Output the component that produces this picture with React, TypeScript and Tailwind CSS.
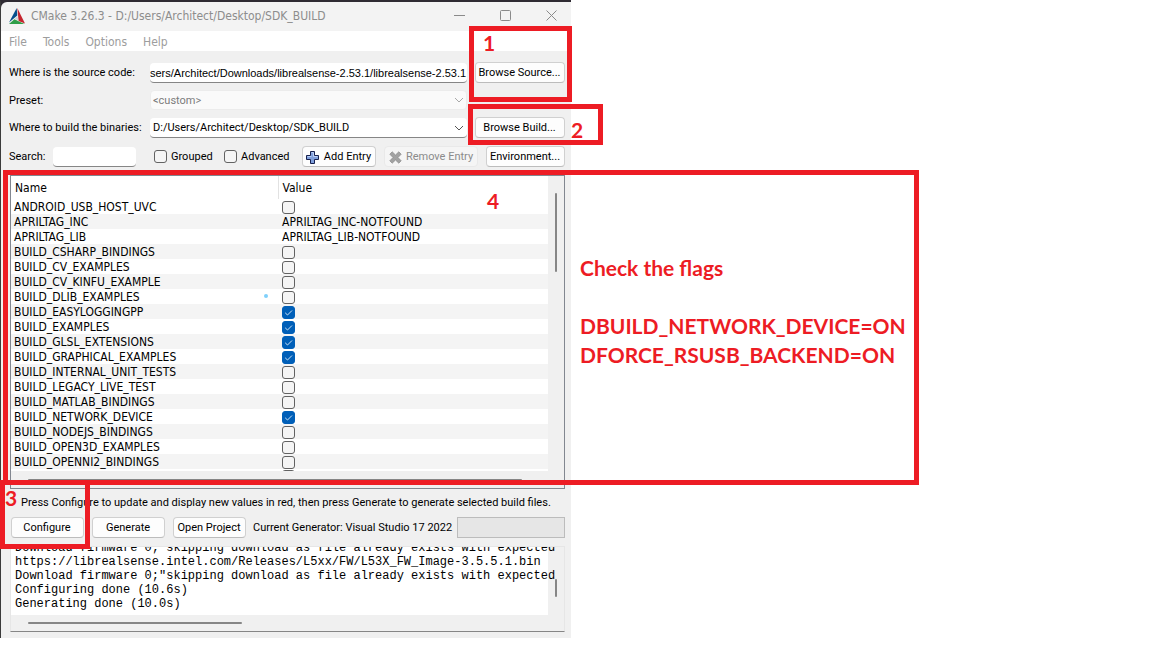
import React from "react";

const entries: { name: string; value: boolean | string }[] = [
  { name: "ANDROID_USB_HOST_UVC", value: false },
  { name: "APRILTAG_INC", value: "APRILTAG_INC-NOTFOUND" },
  { name: "APRILTAG_LIB", value: "APRILTAG_LIB-NOTFOUND" },
  { name: "BUILD_CSHARP_BINDINGS", value: false },
  { name: "BUILD_CV_EXAMPLES", value: false },
  { name: "BUILD_CV_KINFU_EXAMPLE", value: false },
  { name: "BUILD_DLIB_EXAMPLES", value: false },
  { name: "BUILD_EASYLOGGINGPP", value: true },
  { name: "BUILD_EXAMPLES", value: true },
  { name: "BUILD_GLSL_EXTENSIONS", value: true },
  { name: "BUILD_GRAPHICAL_EXAMPLES", value: true },
  { name: "BUILD_INTERNAL_UNIT_TESTS", value: false },
  { name: "BUILD_LEGACY_LIVE_TEST", value: false },
  { name: "BUILD_MATLAB_BINDINGS", value: false },
  { name: "BUILD_NETWORK_DEVICE", value: true },
  { name: "BUILD_NODEJS_BINDINGS", value: false },
  { name: "BUILD_OPEN3D_EXAMPLES", value: false },
  { name: "BUILD_OPENNI2_BINDINGS", value: false },
];

const logLines = [
  'Download firmware 0;"skipping download as file already exists with expected',
  "https://librealsense.intel.com/Releases/L5xx/FW/L53X_FW_Image-3.5.5.1.bin",
  'Download firmware 0;"skipping download as file already exists with expected',
  "Configuring done (10.6s)",
  "Generating done (10.0s)",
];

function Check({ id, label, on = false }: { id?: string; label?: string; on?: boolean }) {
  return (
    <span className="relative block size-[13px] shrink-0">
      <input
        type="checkbox"
        id={id}
        aria-label={label}
        defaultChecked={on}
        className="peer block size-[13px] appearance-none rounded-[3px] border border-[#626262] bg-[#f5f5f5] checked:border-[#005fb8] checked:bg-[#005fb8]"
      />
      <svg
        viewBox="0 0 13 13"
        className="pointer-events-none absolute inset-0 hidden size-[13px] peer-checked:block"
        fill="none"
        stroke="#cfe3f5"
        strokeWidth="1"
      >
        <path d="M3.2 6.8 5.5 9 10 4.5" />
      </svg>
    </span>
  );
}

function Button({ children, className = "" }: { children: React.ReactNode; className?: string }) {
  return (
    <button
      type="button"
      className={`flex h-[21px] shrink-0 items-center justify-center whitespace-nowrap rounded-[4px] border border-[#d0d0d0] border-b-[#bcbcbc] bg-[#fdfdfd] pt-px pr-px ${className}`}
    >
      {children}
    </button>
  );
}

function Chevron({ color }: { color: string }) {
  return (
    <svg viewBox="0 0 10 6" className="pointer-events-none absolute right-[3px] top-[7px] h-[6px] w-[10px]" fill="none" stroke={color}>
      <path d="M1 1l4 4 4-4" />
    </svg>
  );
}

function TitleBar() {
  return (
    <header className="flex h-[29px] items-center rounded-tl-[6px] bg-[#f3f3f3] pb-[2px] pl-2 font-['DejaVu_Sans_Condensed',sans-serif] text-[12px] text-[#8d8d8d]">
      <svg viewBox="0 0 16 16" className="mr-[6px] size-4">
        <path d="M7.7 0 0 14.6 8.3 7.6z" fill="#064f8c" />
        <path d="M8.3 0 16 15.6 9.6 12.9z" fill="#c4242e" />
        <path d="M0 16 5.4 11.2 15.4 16z" fill="#2f9e49" />
        <path d="M8.5 8.2 5.8 10.6 9.3 12.4z" fill="#cfd3d8" />
      </svg>
      <h1 className="flex-1 whitespace-nowrap">CMake 3.26.3 - D:/Users/Architect/Desktop/SDK_BUILD</h1>
      <div className="flex items-center gap-[35px] pr-[14px]">
        <button type="button" aria-label="Minimize">
          <svg viewBox="0 0 11 11" className="size-[11px]" stroke="#8a8a8a">
            <path d="M0 5.5h11" />
          </svg>
        </button>
        <button type="button" aria-label="Maximize">
          <svg viewBox="0 0 11 11" className="size-[11px]" fill="none" stroke="#8a8a8a">
            <rect x=".5" y=".5" width="10" height="10" rx="1" />
          </svg>
        </button>
        <button type="button" aria-label="Close">
          <svg viewBox="0 0 11 11" className="size-[11px]" stroke="#8a8a8a">
            <path d="M.5.5l10 10M10.5.5l-10 10" />
          </svg>
        </button>
      </div>
    </header>
  );
}

function CacheTable() {
  return (
    <section className="relative ml-px mt-2 flex h-[314px] flex-col border border-[#828790]">
      <div className="mr-4 h-[295px] overflow-hidden bg-white">
        <table className="w-full table-fixed border-collapse text-left font-['DejaVu_Sans_Condensed',sans-serif] text-[12px] leading-[14px] text-black">
          <thead>
            <tr className="h-[23px]">
              <th className="w-[267px] border-r border-[#e2e2e2] p-0 pl-1 pt-px font-normal">Name</th>
              <th className="p-0 pl-1 pt-px font-normal">Value</th>
            </tr>
          </thead>
          <tbody>
            {entries.map((e) => (
              <tr key={e.name} className="h-[15px] even:bg-[#f4f4f4]">
                <td className="p-0 pl-[3px] pt-px">{e.name}</td>
                <td className="p-0 pl-1 pt-px">
                  {typeof e.value === "string" ? e.value : <Check label={e.name} on={e.value} />}
                </td>
              </tr>
            ))}
            <tr className="h-[15px]">
              <td className="p-0" />
              <td className="p-0 pl-1">
                <Check label="Next entry" />
              </td>
            </tr>
          </tbody>
        </table>
      </div>
      <span className="absolute right-[7px] top-[17px] h-[79px] w-[2px] rounded bg-[#868686]" />
      <span className="absolute left-[17px] top-[303px] h-[2px] w-[494px] rounded bg-[#868686]" />
      <span className="absolute left-[253px] top-[118px] size-1 rounded-full bg-[#7fd0fb]" />
    </section>
  );
}

function CMakeWindow() {
  return (
    <main className="w-[571px] border-l border-t-2 border-l-[#3b3b3b] border-t-[#2f2b33] bg-[#2f2b33] font-['Roboto',sans-serif] text-[11px] leading-[14px] text-black">
      <TitleBar />
      <nav className="flex h-5 items-center gap-4 bg-white pl-2 pt-px font-['DejaVu_Sans_Condensed',sans-serif] text-[12px] text-[#9d9d9d]">
        {["File", "Tools", "Options", "Help"].map((m) => (
          <button key={m} type="button">{m}</button>
        ))}
      </nav>
      <div className="bg-[#f0f0f0] pb-[6px] pl-2 pr-[6px] pt-[11px]">
        <div className="flex items-center">
          <label htmlFor="src" className="w-[141px] shrink-0 pt-px">Where is the source code:</label>
          <input
            id="src"
            defaultValue="sers/Architect/Downloads/librealsense-2.53.1/librealsense-2.53.1"
            className="mr-2 h-5 min-w-0 flex-1 rounded-sm border-b border-[#868686] bg-white pt-px font-['Liberation_Sans',sans-serif]"
          />
          <Button className="w-[90px]">Browse Source...</Button>
        </div>
        <div className="mt-[7px] flex items-center">
          <label htmlFor="preset" className="w-[141px] shrink-0 pt-px">Preset:</label>
          <div className="relative mr-[98px] min-w-0 flex-1">
            <select id="preset" disabled className="block h-5 w-full appearance-none rounded-sm border border-[#ececec] bg-[#fafafa] pl-[2px] pt-[2px] text-[#7c7c7c] opacity-100">
              <option>&lt;custom&gt;</option>
            </select>
            <Chevron color="#a9a9a9" />
          </div>
        </div>
        <div className="mt-[7px] flex items-center">
          <label htmlFor="bin" className="w-[141px] shrink-0 pt-px">Where to build the binaries:</label>
          <div className="relative mr-2 min-w-0 flex-1">
            <select id="bin" className="block h-5 w-full appearance-none rounded-sm border-b border-[#868686] bg-white pl-[3px] pt-[2px]">
              <option>D:/Users/Architect/Desktop/SDK_BUILD</option>
            </select>
            <Chevron color="#555555" />
          </div>
          <Button className="w-[90px]">Browse Build...</Button>
        </div>
        <div className="mt-2 flex items-center">
          <label htmlFor="search" className="w-11 shrink-0 pt-px">Search:</label>
          <input id="search" className="h-5 w-[83px] min-w-0 rounded-sm border-b border-[#868686] bg-white px-1" />
          <span className="ml-[18px] flex w-[70px] items-center gap-1">
            <Check id="grouped" />
            <label htmlFor="grouped" className="pt-px">Grouped</label>
          </span>
          <span className="flex flex-1 items-center gap-1">
            <Check id="advanced" />
            <label htmlFor="advanced" className="pt-px">Advanced</label>
          </span>
          <div className="flex gap-2">
            <Button className="w-[74px] gap-[5px]">
              <svg viewBox="0 0 13 13" className="size-[13px]">
                <path d="M4.5.5h4v4h4v4h-4v4h-4v-4h-4v-4h4z" fill="#7f9fdc" stroke="#16214f" />
                <path d="M5.5 1.5h2v4h4M1.5 5.5h4" fill="none" stroke="#bcd0f5" />
              </svg>
              Add Entry
            </Button>
            <button type="button" disabled className="flex h-[21px] w-[94px] items-center justify-center gap-1 whitespace-nowrap rounded-[4px] border border-[#e9e9e9] bg-[#f5f5f5] pt-px text-[#8b8b8b]">
              <svg viewBox="0 0 13 13" className="size-[13px]">
                <path d="M3.2.8 6.5 4 9.8.8l2.4 2.4L9 6.5l3.2 3.3-2.4 2.4L6.5 9l-3.3 3.2L.8 9.8 4 6.5.8 3.2z" fill="#a2a2a2" stroke="#8a8a8a" strokeWidth=".7" />
              </svg>
              Remove Entry
            </button>
            <Button className="w-[79px]">Environment...</Button>
          </div>
        </div>

        <CacheTable />

        <p className="flex h-7 items-center whitespace-nowrap pl-3">
          Press Configure to update and display new values in red, then press Generate to generate selected build files.
        </p>
        <div className="flex items-center gap-2 pl-[2px]">
          <Button className="w-[73px]">Configure</Button>
          <Button className="w-[73px]">Generate</Button>
          <Button className="w-[73px]">Open Project</Button>
          <span className="-ml-px w-[196px] whitespace-nowrap pt-px">Current Generator: Visual Studio 17 2022</span>
          <div role="progressbar" aria-label="Progress" className="h-[21px] min-w-0 flex-1 border border-[#bcbcbc] bg-[#e6e6e6]" />
        </div>
        <section className="relative ml-px mt-2 h-[86px] border border-[#e6e6e6] border-b-[#868686]">
          <div className="relative h-[68px] overflow-hidden bg-white">
            <span className="absolute inset-y-0 right-0 w-4 bg-[#f0f0f0]" />
            <div className="relative flex h-full flex-col justify-end pb-1 pl-1 font-['Liberation_Mono',monospace] text-[12px] leading-[14px]">
              {logLines.map((l, i) => (
                <div key={i} className="shrink-0 whitespace-pre">{l}</div>
              ))}
            </div>
          </div>
          <span className="absolute right-[7px] top-8 h-[18px] w-[2px] rounded bg-[#868686]" />
          <span className="absolute left-[17px] top-[75px] h-[2px] w-[214px] rounded bg-[#868686]" />
        </section>
      </div>
    </main>
  );
}

function Mark({ className, n, at }: { className: string; n: string; at: string }) {
  return (
    <div className={`absolute border-[5px] border-[#ed1c24] ${className}`}>
      <span className={`absolute ${at}`}>{n}</span>
    </div>
  );
}

export default function App() {
  return (
    <div className="relative min-h-screen overflow-hidden bg-white">
      <CMakeWindow />
      <div className="pointer-events-none absolute inset-0 font-['Lato',sans-serif] text-[21px] font-bold leading-[29px] text-[#ed1c24]">
        <Mark className="left-[469px] top-[26px] h-[76px] w-[103px]" n="1" at="left-[9px] top-[-3px]" />
        <Mark className="left-[468px] top-[104px] h-[41px] w-[135px]" n="2" at="left-[98px] top-[6px]" />
        <Mark className="left-[3px] top-[170px] h-[315px] w-[916px]" n="4" at="left-[479px] top-[11px]" />
        <Mark className="left-0 top-[480px] h-[69px] w-[90px]" n="3" at="left-0 top-[-2px]" />
        <div className="absolute left-[580px] top-[253px] whitespace-nowrap">
          <p>Check the flags</p>
          <br />
          <p>DBUILD_NETWORK_DEVICE=ON</p>
          <p>DFORCE_RSUSB_BACKEND=ON</p>
        </div>
      </div>
    </div>
  );
}
